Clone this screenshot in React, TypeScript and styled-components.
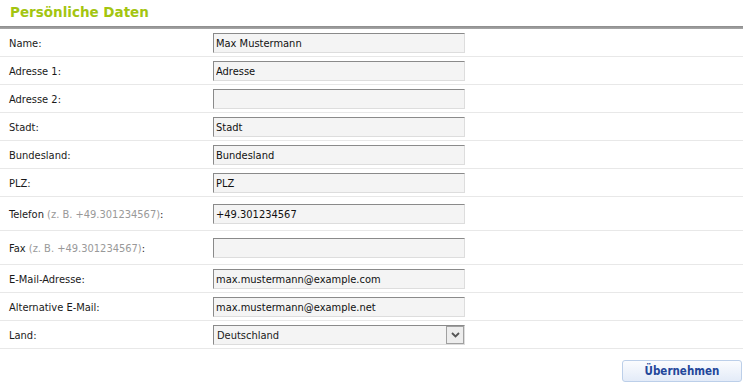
import React from 'react'
import styled, { createGlobalStyle } from 'styled-components'

const GlobalStyle = createGlobalStyle`
  body {
    margin: 0;
    background: #fff;
    font-family: Tahoma, "DejaVu Sans Condensed", "Liberation Sans", sans-serif;
    font-size: 11px;
    color: #1a1a1a;
  }
`

interface Field {
  label: string
  hint?: string
  value: string
  tall?: boolean
}

const fields: Field[] = [
  { label: 'Name', value: 'Max Mustermann' },
  { label: 'Adresse 1', value: 'Adresse' },
  { label: 'Adresse 2', value: '' },
  { label: 'Stadt', value: 'Stadt' },
  { label: 'Bundesland', value: 'Bundesland' },
  { label: 'PLZ', value: 'PLZ' },
  { label: 'Telefon', hint: '(z. B. +49.301234567)', value: '+49.301234567', tall: true },
  { label: 'Fax', hint: '(z. B. +49.301234567)', value: '', tall: true },
  { label: 'E-Mail-Adresse', value: 'max.mustermann@example.com' },
  { label: 'Alternative E-Mail', value: 'max.mustermann@example.net' },
]

const App = () => {
  return (
    <>
      <GlobalStyle />
      <Panel>
        <Title>Persönliche Daten</Title>
        <Rule />
        {fields.map((f) => (
          <Row key={f.label} tall={f.tall}>
            <Label>
              {f.label}
              {f.hint && <Hint> {f.hint}</Hint>}:
            </Label>
            <Input type="text" defaultValue={f.value} />
          </Row>
        ))}
        <Row>
          <Label>Land:</Label>
          <SelectBox>
            <span>Deutschland</span>
            <Arrow>
              <svg width="9" height="6" viewBox="0 0 9 6">
                <path d="M1 1 L4.5 4.5 L8 1" fill="none" stroke="#555" strokeWidth="1.8" />
              </svg>
            </Arrow>
          </SelectBox>
        </Row>
        <Actions>
          <Button>Übernehmen</Button>
        </Actions>
      </Panel>
    </>
  )
}

export default App

const Panel = styled.div`
  width: 743px;
`

const Title = styled.h2`
  margin: 0;
  height: 26px;
  padding-left: 10px;
  line-height: 25px;
  font-family: "DejaVu Sans", Verdana, sans-serif;
  font-size: 13.5px;
  font-weight: bold;
  color: #a3c510;
`

const Rule = styled.div`
  height: 3px;
  background: linear-gradient(#8c8c8c, #a8a8a8);
`

const Row = styled.div<{ tall?: boolean }>`
  display: grid;
  grid-template-columns: 213px 252px;
  align-items: center;
  height: ${(p) => (p.tall ? 33 : 27)}px;
  border-bottom: 1px solid #e8e8e8;
`

const Label = styled.div`
  padding-left: 9px;
  padding-top: 2px;
  white-space: nowrap;
`

const Hint = styled.span`
  color: #999;
`

const Input = styled.input`
  box-sizing: border-box;
  width: 252px;
  height: 20px;
  margin: 0;
  padding: 1px 2px 0;
  font: inherit;
  color: #111;
  background: #f4f4f4;
  border: 1px solid #ddd;
  border-top-color: #8a8a8a;
  border-left-color: #8a8a8a;
  outline: none;
`

const SelectBox = styled.div`
  box-sizing: border-box;
  width: 252px;
  height: 20px;
  display: flex;
  align-items: center;
  justify-content: space-between;
  padding-left: 3px;
  background: #f4f4f4;
  border: 1px solid #ddd;
  border-top-color: #8a8a8a;
  border-left-color: #8a8a8a;

  span {
    padding-top: 1px;
  }
`

const Arrow = styled.div`
  box-sizing: border-box;
  width: 18px;
  height: 18px;
  display: flex;
  align-items: center;
  justify-content: center;
  background: #ededed;
  border: 1px solid #a0a0a0;
`

const Actions = styled.div`
  display: flex;
  justify-content: flex-end;
  padding-top: 11px;
`

const Button = styled.button`
  width: 120px;
  height: 22px;
  margin-right: 1px;
  font-family: inherit;
  font-size: 11.5px;
  font-weight: bold;
  color: #23479a;
  background: linear-gradient(#fbfcfe, #e3ebf8);
  border: 1px solid #bccfe9;
  border-radius: 3px;
  cursor: pointer;
`
